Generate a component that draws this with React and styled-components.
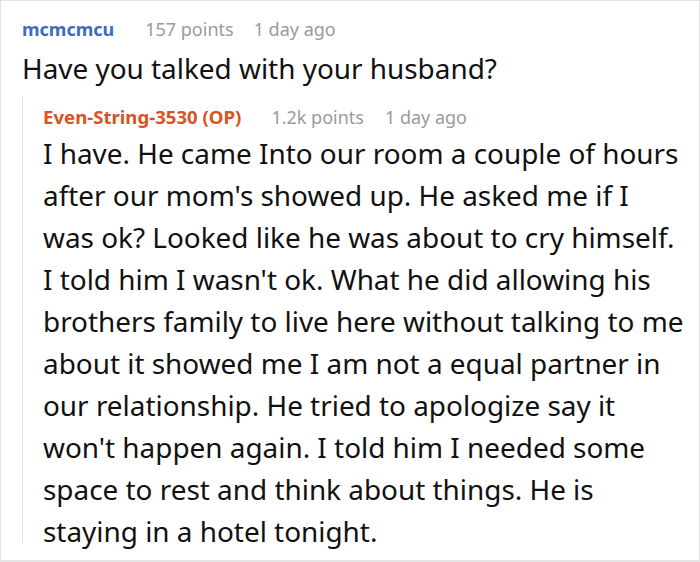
import React from "react";
import styled, { createGlobalStyle } from "styled-components";

const Global = createGlobalStyle`
  html, body { margin: 0; padding: 0; background: #fff; }
  body { font-family: "Noto Sans", "Open Sans", sans-serif; }
`;

const Frame = styled.div`
  box-sizing: border-box;
  width: 700px;
  height: 562px;
  border: 1px solid #e4e4e4;
  border-bottom-width: 2px;
  padding: 14px 0 0 21px;
  overflow: hidden;
  background: #fff;
`;

const Meta = styled.div`
  display: flex;
  align-items: baseline;
  font-size: ${(p) => (p.$op ? 18.6 : 18)}px;
  line-height: 28px;
`;

const Author = styled.span`
  font-weight: 700;
  color: ${(p) => (p.$op ? "#d8531f" : "#3b6cc1")};
  margin-right: ${(p) => (p.$op ? 30 : 31)}px;
`;

const Info = styled.span`
  color: #9a9a9a;
  font-size: 18px;
  margin-right: ${(p) => p.$gap || 0}px;
`;

const Body = styled.p`
  margin: ${(p) => p.$top}px 0 0;
  font-size: 27.9px;
  line-height: 42px;
  color: #111;
  white-space: nowrap;
`;

const Reply = styled.div`
  display: flex;
  margin-top: 7px;
`;

const Rail = styled.div`
  flex: 0 0 1px;
  background: #e2e2e2;
  margin: 0 20px 9px 0;
`;

const ReplyContent = styled.div`
  padding-top: 7px;
`;

const Comment = ({ author, op, points, time, lines, gap, bodyTop, children }) => (
  <div>
    <Meta $op={op}>
      <Author $op={op}>{author}</Author>
      <Info $gap={gap}>{points}</Info>
      <Info>{time}</Info>
    </Meta>
    <Body $top={bodyTop}>
      {lines.map((l, i) => (
        <React.Fragment key={i}>
          {i > 0 && <br />}
          {l}
        </React.Fragment>
      ))}
    </Body>
    {children}
  </div>
);

const replyLines = [
  "I have. He came Into our room a couple of hours",
  "after our mom's showed up. He asked me if I",
  "was ok? Looked like he was about to cry himself.",
  "I told him I wasn't ok. What he did allowing his",
  "brothers family to live here without talking to me",
  "about it showed me I am not a equal partner in",
  "our relationship. He tried to apologize say it",
  "won't happen again. I told him I needed some",
  "space to rest and think about things. He is",
  "staying in a hotel tonight.",
];

export default function App() {
  return (
    <>
      <Global />
      <Frame>
        <Comment
          author="mcmcmcu"
          points="157 points"
          time="1 day ago"
          gap={20}
          bodyTop={4}
          lines={["Have you talked with your husband?"]}
        >
          <Reply>
            <Rail />
            <ReplyContent>
              <Comment
                author="Even-String-3530 (OP)"
                op
                points="1.2k points"
                time="1 day ago"
                gap={21}
                bodyTop={1}
                lines={replyLines}
              />
            </ReplyContent>
          </Reply>
        </Comment>
      </Frame>
    </>
  );
}
